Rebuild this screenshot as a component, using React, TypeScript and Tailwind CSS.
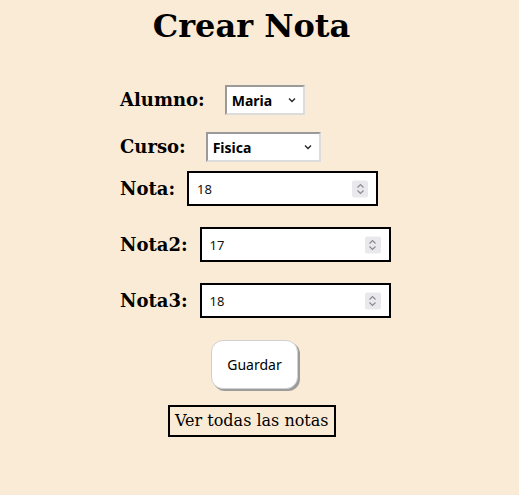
import React, { useState } from 'react';

const serif = "font-['DejaVu_Serif',serif]";
const sans = "font-['Noto_Sans','DejaVu_Sans',sans-serif]";

const Chevron: React.FC = () => (
  <svg width="10" height="10" viewBox="0 0 10 10" className="pointer-events-none absolute right-[8px] top-1/2 -translate-y-1/2">
    <path d="M2 3.5 L5 6.5 L8 3.5" fill="none" stroke="#222" strokeWidth="1.3" />
  </svg>
);

const Spinner: React.FC = () => (
  <div className="pointer-events-none absolute right-[10px] top-1/2 flex h-[17px] w-[16px] -translate-y-1/2 items-center justify-center rounded-[2px] bg-[#e9e9ed]">
    <svg width="11" height="15" viewBox="0 0 11 15">
      <path d="M2.5 6 L5.5 3 L8.5 6" fill="none" stroke="#8a8a8f" strokeWidth="1.2" />
      <path d="M2.5 9 L5.5 12 L8.5 9" fill="none" stroke="#8a8a8f" strokeWidth="1.2" />
    </svg>
  </div>
);

type SelectProps = { value: string; options: string[]; width: string; onChange: (v: string) => void };

const SelectBox: React.FC<SelectProps> = ({ value, options, width, onChange }) => (
  <div className={`relative h-[30px] ${width}`}>
    <select
      value={value}
      onChange={(e) => onChange(e.target.value)}
      className={`h-full w-full appearance-none border-2 border-t-[#9a9a9a] border-l-[#9a9a9a] border-r-[#dcdcdc] border-b-[#dcdcdc] bg-white pl-[5px] text-[14px] font-bold text-black ${sans}`}
    >
      {options.map((o) => (
        <option key={o}>{o}</option>
      ))}
    </select>
    <Chevron />
  </div>
);

const NumberBox: React.FC<{ value: string; onChange: (v: string) => void }> = ({ value, onChange }) => (
  <div className="relative h-[35px] w-[191px]">
    <input
      type="number"
      value={value}
      onChange={(e) => onChange(e.target.value)}
      className={`h-full w-full border-2 border-black bg-white pl-[8px] text-[13px] text-[#111] outline-none [appearance:textfield] [&::-webkit-inner-spin-button]:appearance-none ${sans}`}
    />
    <Spinner />
  </div>
);

export default function App() {
  const [alumno, setAlumno] = useState('Maria');
  const [curso, setCurso] = useState('Fisica');
  const [nota, setNota] = useState('18');
  const [nota2, setNota2] = useState('17');
  const [nota3, setNota3] = useState('18');

  const label = `text-[18px] font-bold leading-none ${serif}`;

  return (
    <div className={`min-h-screen bg-[#faebd7] text-black ${serif}`}>
      <h1 className="pr-[16px] pt-[8px] text-center text-[32px] font-bold leading-[37px]">Crear Nota</h1>

      <form className="ml-[120px] mt-[40px]" onSubmit={(e) => e.preventDefault()}>
        <div className="flex h-[30px] items-center">
          <label className={`${label} mr-[20px]`}>Alumno:</label>
          <SelectBox value={alumno} options={['Maria', 'Juan', 'Pedro']} width="w-[80px]" onChange={setAlumno} />
        </div>
        <div className="mt-[17px] flex h-[30px] items-center">
          <label className={`${label} mr-[20px]`}>Curso:</label>
          <SelectBox value={curso} options={['Fisica', 'Matematica', 'Quimica']} width="w-[115px]" onChange={setCurso} />
        </div>
        <div className="mt-[9px] flex h-[35px] items-center">
          <label className={`${label} mr-[12px]`}>Nota:</label>
          <NumberBox value={nota} onChange={setNota} />
        </div>
        <div className="mt-[21px] flex h-[35px] items-center">
          <label className={`${label} mr-[12px]`}>Nota2:</label>
          <NumberBox value={nota2} onChange={setNota2} />
        </div>
        <div className="mt-[21px] flex h-[35px] items-center">
          <label className={`${label} mr-[12px]`}>Nota3:</label>
          <NumberBox value={nota3} onChange={setNota3} />
        </div>

        <div className="mt-[22px] flex pl-[91px]">
          <button
            type="submit"
            className={`h-[49px] w-[87px] rounded-[12px] border border-[#d0d0d0] bg-white text-[14px] text-black shadow-[2px_2px_0_#9c9c9c] ${sans}`}
          >
            Guardar
          </button>
        </div>
      </form>

      <div className="mt-[16px] flex pl-[168px]">
        <a href="#" className="flex h-[32px] items-center border-2 border-black px-[5px] text-[16px] leading-none text-black">
          Ver todas las notas
        </a>
      </div>
    </div>
  );
}
